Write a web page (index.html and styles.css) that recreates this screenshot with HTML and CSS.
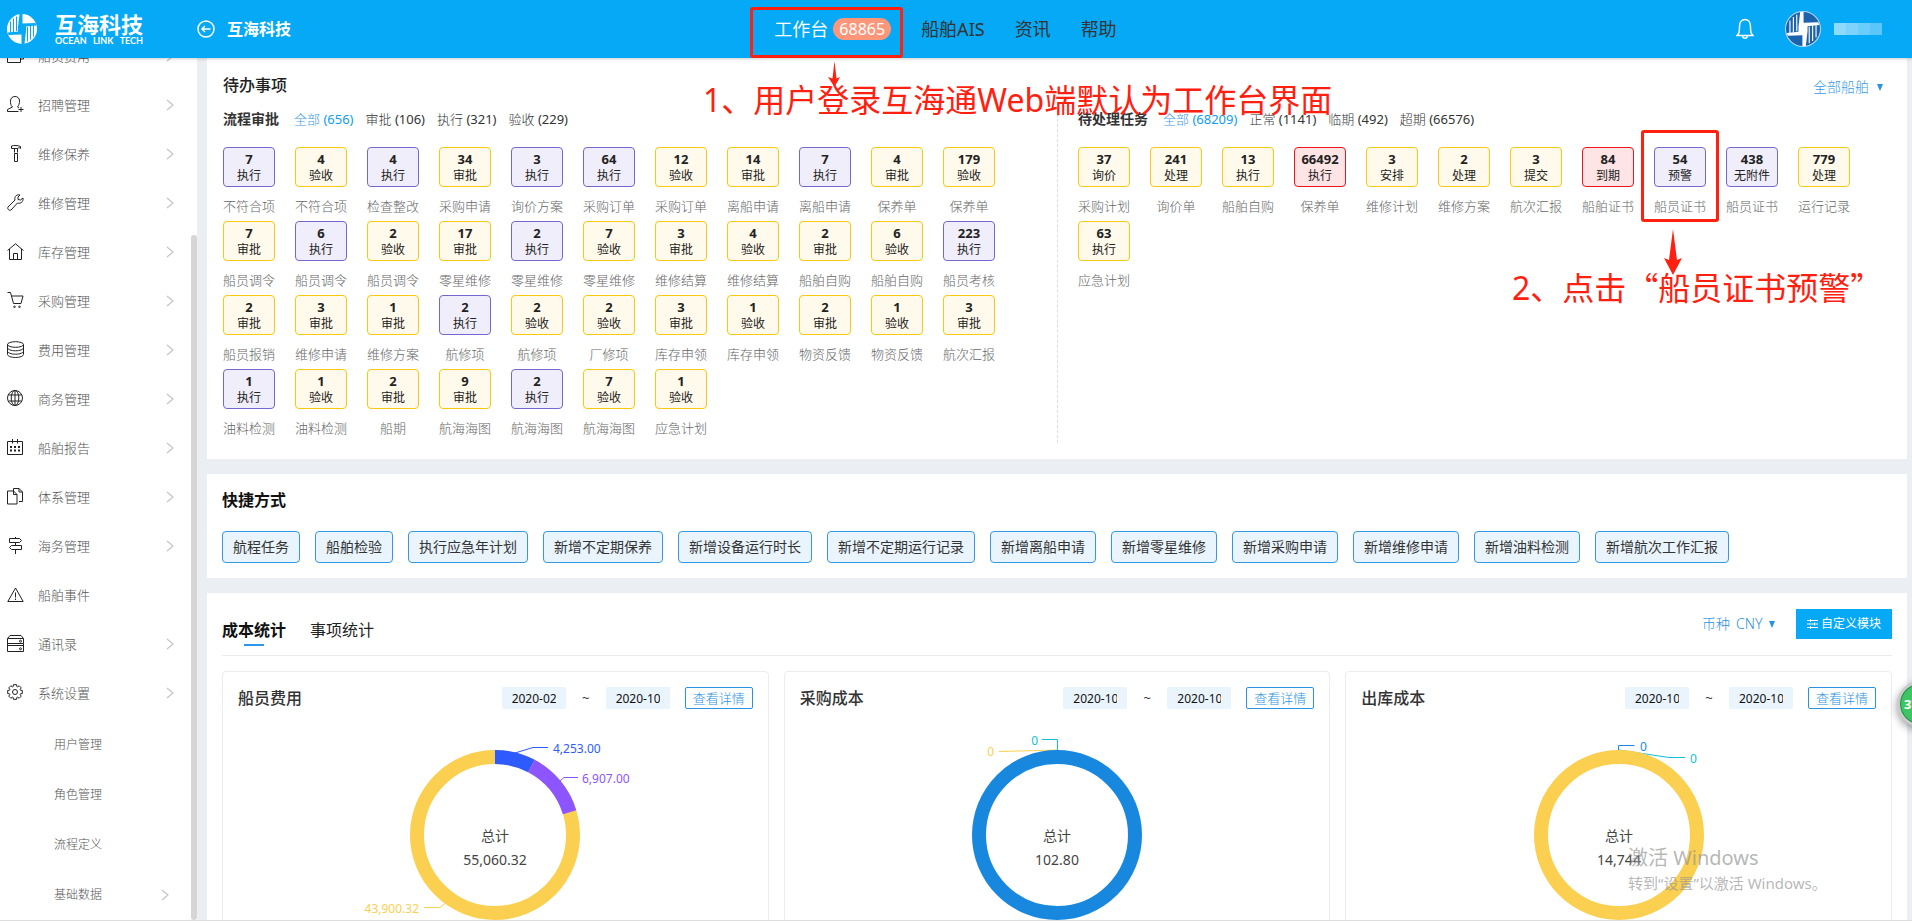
FILE: index.html
```html
<!DOCTYPE html>
<html lang="zh-CN">
<head>
<meta charset="utf-8">
<title>互海科技 工作台</title>
<link rel="stylesheet" href="styles.css">
</head>
<body>
<svg class="defs" aria-hidden="true">
  <symbol id="chev" viewBox="0 0 8 12"><path d="M1 1l6 5-6 5"/></symbol>
  <symbol id="tri" viewBox="0 0 6 7"><path d="M0 0h6L3 7z"/></symbol>
  <symbol id="emblem" viewBox="0 0 30 30">
    <circle cx="15" cy="15" r="15"/>
    <path class="blade" d="M12.500 0h3v9.500L28.500 9l.8 2.500L19 12.500 11 18.500V13z"/>
    <path class="blade" d="M17.500 30h-3v-9.500L1.500 21l-.8-2.500L11 17.500 19 11.500V17z"/>
    <path class="cut" d="M3.500 7.500v11M6.500 4.500v13.500M9.500 2.500v14.500M26.500 22.500v-11M23.500 25.500v-13.500M20.500 27.500v-14.500"/>
  </symbol>
</svg>
<div class="app">
  <header class="top">
    <div class="top-left">
      <a class="brand" href="#">
        <svg class="brand-mark" aria-hidden="true"><use href="#emblem"/></svg>
        <span class="brand-text"><span class="brand-cn">互海科技</span><span class="brand-en"><span>OCEAN</span><span>LINK</span><span>TECH</span></span></span>
      </a>
      <a class="back" href="#">
        <svg viewBox="0 0 18 18" aria-hidden="true"><circle cx="9" cy="9" r="8"/><path d="M13.500 9H5M8 6L5 9l3 3"/></svg>
        <span>互海科技</span>
      </a>
    </div>
    <nav class="nav">
      <a class="active" href="#">工作台<span class="badge">68865</span><i class="frame frame-nav"></i></a>
      <a href="#">船舶AIS</a><a href="#">资讯</a><a href="#">帮助</a>
    </nav>
    <div class="top-right">
      <button class="bell" aria-label="消息"><svg viewBox="0 0 18 22" aria-hidden="true"><path d="M1 17.500c2-2 2.500-3 2.500-9C3.500 4 6 1.500 9 1.500S14.500 4 14.500 8.500c0 6 .5 7 2.500 9zM6.500 18c.5 3 4.500 3 5 0"/></svg></button>
      <svg class="avatar" viewBox="0 0 36 36" aria-hidden="true"><circle class="rim" cx="18" cy="18" r="18"/><svg x="1" y="1" width="34" height="34"><use href="#emblem"/></svg></svg>
      <span class="mask"><i></i><i></i><i></i><i></i></span>
    </div>
  </header>

  <div class="body">
    <aside class="side">
      <nav class="menu">
        <a href="#"><svg class="ico" viewBox="0 0 17 17"><path d="M.5 3.500h13v12H.5zM13.500 8h3v4h-3M2 3L11 .5"/></svg><span>船员费用</span><svg class="chev"><use href="#chev"/></svg></a>
        <a href="#"><svg class="ico" viewBox="0 0 17 17"><path d="M11.500 15.500H.5v-2l5-2.500C3.500 9 3.500 7.500 3.500 5c0-3 2-4.500 4.500-4.500S12.500 2 12.500 5c0 2.500-.5 4-2 6l1.500 1M14 11v5M11.500 13.500h5"/></svg><span>招聘管理</span><svg class="chev"><use href="#chev"/></svg></a>
        <a href="#"><svg class="ico" viewBox="0 0 17 17"><path d="M4.500 1c3-.7 6-.7 9 .5v2c-1-1-2-1-3 0h-6zM7.500 3.500v4M10.500 3.500v4M7.500 8.500h3v8h-3z"/></svg><span>维修保养</span><svg class="chev"><use href="#chev"/></svg></a>
        <a href="#"><svg class="ico" viewBox="0 0 17 17"><path d="M13 1c-3-1-6 1.500-5 5L1 13c-1 2 1 4 3 3l6.500-7c3.500 1 6-1.500 5.500-5l-2.500 2-2.500-.5V3z"/></svg><span>维修管理</span><svg class="chev"><use href="#chev"/></svg></a>
        <a href="#"><svg class="ico" viewBox="0 0 17 17"><path d="M.5 7.500L8.500.8l8 6.700M2.500 6v10.500h12V6M6.500 16.500v-6h4v6"/></svg><span>库存管理</span><svg class="chev"><use href="#chev"/></svg></a>
        <a href="#"><svg class="ico" viewBox="0 0 17 17"><path d="M.5.5h3l3 11h7.500l2-7.500H4.500"/><circle cx="7.500" cy="14.800" r=".8"/><circle cx="12.500" cy="14.800" r=".8"/></svg><span>采购管理</span><svg class="chev"><use href="#chev"/></svg></a>
        <a href="#"><svg class="ico" viewBox="0 0 17 17"><ellipse cx="8.500" cy="3.500" rx="8" ry="2.800"/><path d="M.5 3.500v10c0 1.500 3.500 3 8 3s8-1.500 8-3v-10M.5 6.800c0 1.500 3.500 3 8 3s8-1.500 8-3M.5 10.200c0 1.500 3.500 3 8 3s8-1.500 8-3"/></svg><span>费用管理</span><svg class="chev"><use href="#chev"/></svg></a>
        <a href="#"><svg class="ico" viewBox="0 0 17 17"><circle cx="8" cy="8" r="7.500"/><ellipse cx="8" cy="8" rx="3.800" ry="7.500"/><path d="M8 .5v15M1.500 5h13M1.500 11h13"/></svg><span>商务管理</span><svg class="chev"><use href="#chev"/></svg></a>
        <a href="#"><svg class="ico" viewBox="0 0 17 17"><path d="M.5 2.500h15v13H.5zM5.500 0v4.500M10.500 0v4.500"/><path class="dots" d="M3 8h10.500M3 11.500h10.500"/></svg><span>船舶报告</span><svg class="chev"><use href="#chev"/></svg></a>
        <a href="#"><svg class="ico" viewBox="0 0 17 17"><path d="M.5 3h6l3.500 3.500v9.500H.5zM6.500 3v3.500H10M6.500 3V.5h5.500L15.500 4v9.500H12M12 .5V4h3.500"/></svg><span>体系管理</span><svg class="chev"><use href="#chev"/></svg></a>
        <a href="#"><svg class="ico" viewBox="0 0 17 17"><path d="M2.500 1.500h10l2 2-2 2h-10zM4.500 8.500h10v4h-10l-2-2zM8.500 0v1.500M8.500 5.500v3M8.500 12.500V17"/></svg><span>海务管理</span><svg class="chev"><use href="#chev"/></svg></a>
        <a href="#"><svg class="ico" viewBox="0 0 17 17"><path d="M8.500 2L16.200 15.500H.8zM8.500 6.500v5M8.500 12.500v1.500"/></svg><span>船舶事件</span></a>
        <a href="#"><svg class="ico" viewBox="0 0 17 17"><path d="M.5 3.500L3 .5h11l2.500 3v5H.5zM.5 3.500h16M.5 8.500h16v8H.5zM.5 10.500h16"/><circle cx="13.500" cy="6.200" r="1"/><circle cx="13.500" cy="13.800" r="1"/></svg><span>通讯录</span><svg class="chev"><use href="#chev"/></svg></a>
        <a href="#"><svg class="ico" viewBox="0 0 17 17"><circle cx="8" cy="8" r="2.500"/><path d="M15.300 9.600 13.600 9.700 13.100 10.700 14.300 12.100 12.100 14.300 10.700 13.100 9.700 13.600 9.600 15.300H6.400L6.300 13.600 5.300 13.100 3.900 14.300 1.700 12.100 2.900 10.700 2.400 9.700.7 9.600V6.400L2.400 6.300 2.900 5.300 1.700 3.900 3.900 1.700 5.300 2.900 6.300 2.400 6.400.7H9.600L9.700 2.400 10.700 2.900 12.100 1.700 14.300 3.900 13.100 5.300 13.600 6.300 15.300 6.400z"/></svg><span>系统设置</span><svg class="chev"><use href="#chev"/></svg></a>
      </nav>
      <nav class="submenu">
        <a href="#">用户管理</a><a href="#">角色管理</a><a href="#">流程定义</a>
        <a href="#">基础数据<svg class="chev"><use href="#chev"/></svg></a>
      </nav>
      <i class="thumb"></i>
    </aside>

    <main class="main">
      <section class="panel todo">
        <div class="todo-head"><h2>待办事项</h2>
          <label class="pick"><select aria-label="船舶"><option>全部船舶</option></select><svg class="tri"><use href="#tri"/></svg></label></div>
        <div class="todo-cols">
          <div class="col">
            <div class="filters"><h3>流程审批</h3><a class="on" href="#">全部 <b>(656)</b></a><a href="#">审批 <b>(106)</b></a><a href="#">执行 <b>(321)</b></a><a href="#">验收 <b>(229)</b></a></div>
            <div class="tiles">
              <a class="p" href="#"><span><b>7</b>执行</span>不符合项</a>
              <a href="#"><span><b>4</b>验收</span>不符合项</a>
              <a class="p" href="#"><span><b>4</b>执行</span>检查整改</a>
              <a href="#"><span><b>34</b>审批</span>采购申请</a>
              <a class="p" href="#"><span><b>3</b>执行</span>询价方案</a>
              <a class="p" href="#"><span><b>64</b>执行</span>采购订单</a>
              <a href="#"><span><b>12</b>验收</span>采购订单</a>
              <a href="#"><span><b>14</b>审批</span>离船申请</a>
              <a class="p" href="#"><span><b>7</b>执行</span>离船申请</a>
              <a href="#"><span><b>4</b>审批</span>保养单</a>
              <a href="#"><span><b>179</b>验收</span>保养单</a>
              <a href="#"><span><b>7</b>审批</span>船员调令</a>
              <a class="p" href="#"><span><b>6</b>执行</span>船员调令</a>
              <a href="#"><span><b>2</b>验收</span>船员调令</a>
              <a href="#"><span><b>17</b>审批</span>零星维修</a>
              <a class="p" href="#"><span><b>2</b>执行</span>零星维修</a>
              <a href="#"><span><b>7</b>验收</span>零星维修</a>
              <a href="#"><span><b>3</b>审批</span>维修结算</a>
              <a href="#"><span><b>4</b>验收</span>维修结算</a>
              <a href="#"><span><b>2</b>审批</span>船舶自购</a>
              <a href="#"><span><b>6</b>验收</span>船舶自购</a>
              <a class="p" href="#"><span><b>223</b>执行</span>船员考核</a>
              <a href="#"><span><b>2</b>审批</span>船员报销</a>
              <a href="#"><span><b>3</b>审批</span>维修申请</a>
              <a href="#"><span><b>1</b>审批</span>维修方案</a>
              <a class="p" href="#"><span><b>2</b>执行</span>航修项</a>
              <a href="#"><span><b>2</b>验收</span>航修项</a>
              <a href="#"><span><b>2</b>验收</span>厂修项</a>
              <a href="#"><span><b>3</b>审批</span>库存申领</a>
              <a href="#"><span><b>1</b>验收</span>库存申领</a>
              <a href="#"><span><b>2</b>审批</span>物资反馈</a>
              <a href="#"><span><b>1</b>验收</span>物资反馈</a>
              <a href="#"><span><b>3</b>审批</span>航次汇报</a>
              <a class="p" href="#"><span><b>1</b>执行</span>油料检测</a>
              <a href="#"><span><b>1</b>验收</span>油料检测</a>
              <a href="#"><span><b>2</b>审批</span>船期</a>
              <a href="#"><span><b>9</b>审批</span>航海海图</a>
              <a class="p" href="#"><span><b>2</b>执行</span>航海海图</a>
              <a href="#"><span><b>7</b>验收</span>航海海图</a>
              <a href="#"><span><b>1</b>验收</span>应急计划</a>
            </div>
          </div>
          <div class="col">
            <div class="filters"><h3>待处理任务</h3><a class="on" href="#">全部 <b>(68209)</b></a><a href="#">正常 <b>(1141)</b></a><a href="#">临期 <b>(492)</b></a><a href="#">超期 <b>(66576)</b></a></div>
            <div class="tiles">
              <a href="#"><span><b>37</b>询价</span>采购计划</a>
              <a href="#"><span><b>241</b>处理</span>询价单</a>
              <a href="#"><span><b>13</b>执行</span>船舶自购</a>
              <a class="r" href="#"><span><b>66492</b>执行</span>保养单</a>
              <a href="#"><span><b>3</b>安排</span>维修计划</a>
              <a href="#"><span><b>2</b>处理</span>维修方案</a>
              <a href="#"><span><b>3</b>提交</span>航次汇报</a>
              <a class="r" href="#"><span><b>84</b>到期</span>船舶证书</a>
              <a class="p" href="#"><span><b>54</b>预警</span>船员证书<i class="frame frame-tile"></i></a>
              <a class="p" href="#"><span><b>438</b>无附件</span>船员证书</a>
              <a href="#"><span><b>779</b>处理</span>运行记录</a>
              <a href="#"><span><b>63</b>执行</span>应急计划</a>
            </div>
          </div>
        </div>
      </section>

      <section class="panel quick">
        <h2>快捷方式</h2>
        <div class="quick-list">
          <button>航程任务</button><button>船舶检验</button><button>执行应急年计划</button><button>新增不定期保养</button><button>新增设备运行时长</button><button>新增不定期运行记录</button><button>新增离船申请</button><button>新增零星维修</button><button>新增采购申请</button><button>新增维修申请</button><button>新增油料检测</button><button>新增航次工作汇报</button>
        </div>
      </section>

      <section class="panel stats">
        <div class="stats-head">
          <div class="tabs"><button class="on">成本统计</button><button>事项统计</button></div>
          <div class="stats-tools">
            <label class="pick cur">币种<select aria-label="币种"><option>CNY</option></select><svg class="tri"><use href="#tri"/></svg></label>
            <button class="custom"><svg viewBox="0 0 11 10" aria-hidden="true"><path d="M0 1.500h11M0 5h11M0 8.500h11M3.500 0v3M7.500 3.500v3M3.500 7v3"/></svg>自定义模块</button>
          </div>
        </div>
        <div class="cards">
          <article class="card">
            <div class="card-head"><h3>船员费用</h3><input aria-label="开始月份" value="2020-02"><em>~</em><input aria-label="结束月份" value="2020-10"><button>查看详情</button></div>
            <svg class="chart" viewBox="0 0 400 220">
              <circle class="ring" cx="200" cy="110" r="78" stroke="#fbd050"/>
              <path class="ring" d="M200 32A78 78 0 0 1 236.400 41" stroke="#2d5bff"/>
              <path class="ring" d="M236.400 41A78 78 0 0 1 274.600 87.200" stroke="#8d55ff"/>
              <path class="lead" d="M220 28l18-5.500h15" stroke="#2d5bff"/><text x="258" y="28" fill="#2d5bff">4,253.00</text>
              <path class="lead" d="M265 56l4-3.500h14" stroke="#8d55ff"/><text x="287" y="58" fill="#8d55ff">6,907.00</text>
              <path class="lead" d="M129 182.500h16l5-4" stroke="#fbd050"/><text x="124" y="188" text-anchor="end" fill="#fbd050">43,900.32</text>
              <text class="sum" x="200" y="116">总计</text><text class="sum" x="200" y="140">55,060.32</text>
            </svg>
          </article>
          <article class="card">
            <div class="card-head"><h3>采购成本</h3><input aria-label="开始月份" value="2020-10"><em>~</em><input aria-label="结束月份" value="2020-10"><button>查看详情</button></div>
            <svg class="chart" viewBox="0 0 400 220">
              <path class="lead" d="M142 26.500L200 25" stroke="#fbd050"/><text x="137" y="31" text-anchor="end" fill="#fbd050">0</text>
              <path class="lead" d="M185 14.500h15.500V26" stroke="#10c0d8"/><text x="181" y="20" text-anchor="end" fill="#10c0d8">0</text>
              <circle class="ring" cx="200" cy="110" r="78" stroke="#1888df"/>
              <text class="sum" x="200" y="116">总计</text><text class="sum" x="200" y="140">102.80</text>
            </svg>
          </article>
          <article class="card">
            <div class="card-head"><h3>出库成本</h3><input aria-label="开始月份" value="2020-10"><em>~</em><input aria-label="结束月份" value="2020-10"><button>查看详情</button></div>
            <svg class="chart" viewBox="0 0 400 220">
              <path class="lead" d="M200 25l50 7.500h16" stroke="#10c0d8"/><text x="271" y="38" fill="#10c0d8">0</text>
              <path class="lead" d="M199.500 26v-5.500h16" stroke="#1888df"/><text x="221" y="26" fill="#1888df">0</text>
              <circle class="ring" cx="200" cy="110" r="78" stroke="#fbd050"/>
              <text class="sum" x="200" y="116">总计</text><text class="sum" x="200" y="140">14,744</text>
            </svg>
          </article>
        </div>
      </section>
    </main>
  </div>
  <footer class="foot"></footer>

  <svg class="arrow arrow-one" viewBox="0 0 12 26" aria-hidden="true"><path d="M6.500 0l2 17.500 3.500-1.500-5.500 10L0 16l4.500 1.500z"/></svg>
  <p class="note note-one">1、用户登录互海通Web端默认为工作台界面</p>
  <svg class="arrow arrow-two" viewBox="0 0 18 46" aria-hidden="true"><path d="M9 0l4 31 5-2-9 17L0 29l5 2z"/></svg>
  <p class="note note-two">2、点击<span class="cjk">“船员证书预警”</span></p>
  <div class="activate"><p>激活 Windows</p><p>转到“设置”以激活 Windows。</p></div>
  <div class="ball">37</div>
</div>
</body>
</html>
```
FILE: styles.css
```css
* { box-sizing: border-box; }
body, h2, h3, p { margin: 0; }
body {
  font-family: "Noto Sans", "Noto Sans CJK SC", sans-serif;
  font-size: 13px;
  line-height: 20px;
  color: #333;
  background: #ebeff4;
}
a { color: inherit; text-decoration: none; }
button, select, input { font: inherit; color: inherit; margin: 0; }
button { cursor: pointer; }
i, em { font-style: normal; }
.defs { position: absolute; width: 0; height: 0; }

.app {
  position: relative;
  display: flex;
  flex-direction: column;
  height: 100vh;
  overflow: hidden;
}

/* header */
.top {
  position: relative;
  z-index: 2;
  display: grid;
  grid-template-columns: 1fr auto 1fr;
  align-items: center;
  flex: none;
  height: 58px;
  padding-right: 21px;
  background: #05a9f5;
  color: #fff;
  box-shadow: 0 1px 3px rgba(0, 0, 0, .2);
}
.top-left { display: flex; align-items: center; }
.brand { display: flex; align-items: center; gap: 18px; width: 190px; padding-left: 7px; }
.brand-mark {
  --blade: #05a9f5;
  width: 30px;
  height: 30px;
  fill: #fff;
}
.brand-text { display: flex; flex-direction: column; width: 88px; }
.brand-cn { font-size: 22px; font-weight: 700; line-height: 24px; }
.brand-en {
  display: flex;
  justify-content: space-between;
  font-family: Lato, sans-serif;
  font-size: 9px;
  font-weight: 700;
  line-height: 10px;
}
.blade { fill: var(--blade); }
.cut { fill: none; stroke: var(--blade); stroke-width: 1; }
.back { display: flex; align-items: center; gap: 12px; padding-left: 7px; font-size: 16px; font-weight: 700; line-height: 24px; }
.back svg { width: 18px; height: 18px; fill: none; stroke: #fff; stroke-width: 1.5; }
.nav { display: flex; gap: 30px; font-size: 18px; line-height: 24px; color: #333; }
.nav a { position: relative; display: flex; align-items: center; }
.nav .active { color: #fff; }
.badge {
  margin-left: 5px;
  padding: 0 6px;
  border-radius: 11px;
  background: #ff9679;
  font-size: 16px;
  line-height: 22px;
}
.top-right { display: flex; align-items: center; justify-content: flex-end; padding-right: 9px; }
.bell { width: 18px; height: 22px; padding: 0; border: 0; background: none; }
.bell svg { display: block; fill: none; stroke: #fff; stroke-width: 1.5; }
.avatar {
  --blade: #fff;
  width: 36px;
  height: 36px;
  margin: 0 13px 0 31px;
  fill: #1d62ac;
}
.rim { fill: #b9d9f0; }
.mask { display: flex; width: 48px; height: 12px; }
.mask i { flex: 1; background: #8ddafb; }
.mask i:nth-child(2) { background: #7dd3fa; }
.mask i:nth-child(3) { background: #6bcdfa; }
.mask i:nth-child(4) { background: #5ac6f9; }

/* layout */
.body { display: flex; flex: 1; min-height: 0; }
.foot { flex: none; height: 3px; border-top: 1px solid #ddd; background: #fff; }

/* sidebar */
.side {
  position: relative;
  flex: none;
  width: 197px;
  overflow: hidden;
  background: #fff;
  color: #555;
  font-weight: 300;
}
.menu { margin-top: -27px; }
.menu a { display: flex; align-items: center; height: 49px; padding: 0 23px 0 7px; }
.ico {
  width: 17px;
  height: 17px;
  margin-right: 14px;
  fill: none;
  stroke: #222;
  stroke-width: 1;
}
.ico .dots { stroke-width: 2; stroke-dasharray: 2 2; }
.chev { width: 8px; height: 12px; margin-left: auto; fill: none; stroke: #c4c4c4; stroke-width: 1.2; }
.submenu { padding-top: 3px; font-size: 12px; }
.submenu a { display: flex; align-items: center; height: 50px; padding: 0 28px 0 54px; }
.thumb {
  position: absolute;
  top: 177px;
  right: 0;
  bottom: 0;
  width: 6px;
  border-radius: 3px;
  background: #d6d6d6;
}

/* main */
.main {
  display: flex;
  flex-direction: column;
  gap: 15px;
  flex: 1;
  min-width: 0;
  padding: 0 5px 0 10px;
  overflow: hidden;
}
.panel { flex: none; padding: 0 15px; background: #fff; }
h2 { font-size: 16px; font-weight: 700; line-height: 24px; }
.pick { display: flex; align-items: center; color: #3a9be6; font-weight: 300; font-size: 14px; }
.pick select { appearance: none; padding: 0; border: 0; background: none; }
.tri { width: 6px; height: 7px; margin-left: 8px; fill: #2a92e2; }

.todo { padding: 15px 15px 16px 16px; }
.todo-head { display: flex; justify-content: space-between; align-items: flex-start; height: 36px; }
.todo-head h2 { font-weight: 500; color: #222; }
.todo-head .pick { padding: 4px 9px 0 0; }
.todo-cols { display: flex; }
.col { flex: none; width: 834px; height: 334px; }
.col + .col { flex: 1; padding-left: 20px; border-left: 1px dashed #ddd; }
.filters { display: flex; align-items: center; gap: 12px; height: 20px; font-weight: 300; }
.filters h3 { margin-right: 3px; font-size: 14px; font-weight: 700; }
.filters b { font-weight: 400; }
.filters .on { color: #3a9be6; }
.filters .on b { color: #0d9df0; }
.tiles {
  display: grid;
  grid-template-columns: repeat(11, 52px);
  column-gap: 20px;
  grid-auto-rows: 74px;
  padding-top: 18px;
}
.tiles a {
  position: relative;
  color: #666;
  font-weight: 300;
  line-height: 18px;
  text-align: center;
  white-space: nowrap;
}
.tiles span {
  display: block;
  height: 40px;
  margin-bottom: 10px;
  padding-top: 3px;
  border: 1px solid #fcc80f;
  border-radius: 4px;
  background: #fffaeb;
  color: #222;
  font-size: 12px;
  font-weight: 400;
  line-height: 18px;
}
.tiles b { display: block; font-size: 13px; line-height: 16px; }
.tiles .p span { border-color: #7468cf; background: #f0eefb; }
.tiles .r span { border-color: #f0141e; background: #ffe4e5; }

.quick { padding-top: 14px; padding-bottom: 15px; color: #111; }
.quick-list { display: flex; flex-wrap: wrap; gap: 15px; padding-top: 19px; }
.quick button {
  height: 32px;
  padding: 0 10px;
  border: 1px solid #3498e2;
  border-radius: 4px;
  background: #e9f4fd;
  color: #333;
  font-size: 14px;
}

.stats-head { display: flex; justify-content: space-between; height: 63px; border-bottom: 1px solid #eaeaea; }
.tabs { display: flex; gap: 24px; align-items: flex-end; }
.tabs button {
  position: relative;
  height: 37px;
  padding: 0 0 13px;
  border: 0;
  background: none;
  color: #222;
  font-size: 16px;
  line-height: 24px;
}
.tabs .on { color: #111; font-weight: 700; }
.tabs .on::after {
  content: "";
  position: absolute;
  left: 22px;
  right: 22px;
  bottom: 9px;
  height: 2px;
  background: #2a98e5;
}
.stats-tools { display: flex; align-items: flex-start; padding-top: 16px; }
.cur { gap: 6px; height: 30px; margin-right: 21px; color: #2a92e2; font-size: 14px; }
.cur .tri { margin-left: 0; }
.custom {
  display: flex;
  align-items: center;
  gap: 3px;
  height: 30px;
  padding: 0 11px;
  border: 0;
  background: #05a9f5;
  color: #fff;
  font-size: 12px;
}
.custom svg { width: 11px; height: 10px; fill: none; stroke: #fff; stroke-width: 1; }

.cards { display: grid; grid-template-columns: repeat(3, 1fr); gap: 15px; padding: 15px 0; }
.card { border: 1px solid #ececec; border-radius: 4px; }
.card-head { display: flex; align-items: center; height: 22px; margin: 15px 15px 0; }
.card-head h3 { flex: 1; font-size: 16px; font-weight: 500; }
.card-head input {
  width: 64px;
  height: 22px;
  padding: 0 10px;
  border: 0;
  border-radius: 2px;
  background: #e9f4fd;
  color: #111;
  font-size: 12px;
}
.card-head em { width: 40px; text-align: center; }
.card-head button {
  height: 22px;
  margin-left: 15px;
  padding: 0 7px;
  border: 1px solid #2a92e2;
  border-radius: 2px;
  background: #fff;
  color: #2a92e2;
  font-size: 13px;
  font-weight: 300;
  line-height: 20px;
}
.chart { display: block; width: 400px; height: 220px; margin: 16px auto 0; font-size: 12px; }
.ring { fill: none; stroke-width: 14; }
.lead { fill: none; stroke-width: 1; }
.sum { fill: #444; font-size: 14px; text-anchor: middle; }

/* annotations */
.frame { position: absolute; border: 3px solid #ff2010; border-radius: 3px; }
.frame-nav { top: -10px; bottom: -17px; left: -24px; right: -12px; }
.frame-tile { top: -17px; left: -13px; right: -13px; height: 92px; }
.note, .arrow, .activate, .ball { position: absolute; z-index: 3; }
.note { color: #ff2010; font-size: 32px; line-height: 40px; white-space: nowrap; }
.note-one { top: 80px; left: 703px; }
.note-two { top: 266px; left: 1512px; }
.cjk { font-family: "Noto Sans CJK SC", sans-serif; }
.arrow { fill: #ff2010; }
.arrow-one { top: 61px; left: 828px; width: 12px; height: 26px; }
.arrow-two { top: 229px; left: 1664px; width: 18px; height: 46px; }
.activate { top: 844px; left: 1628px; color: rgba(150, 150, 150, .7); font-size: 15px; line-height: 22px; }
.activate p:first-child { font-size: 20px; line-height: 28px; }
.ball {
  top: 681px;
  left: 1897px;
  width: 46px;
  height: 46px;
  padding-left: 4px;
  border: 3px solid #c8cccc;
  border-radius: 50%;
  background: #3fc463;
  box-shadow: inset 0 0 0 1px #1f8a43, 0 3px 8px rgba(0, 0, 0, .4);
  color: #fff;
  font-weight: 700;
  line-height: 40px;
}
```
